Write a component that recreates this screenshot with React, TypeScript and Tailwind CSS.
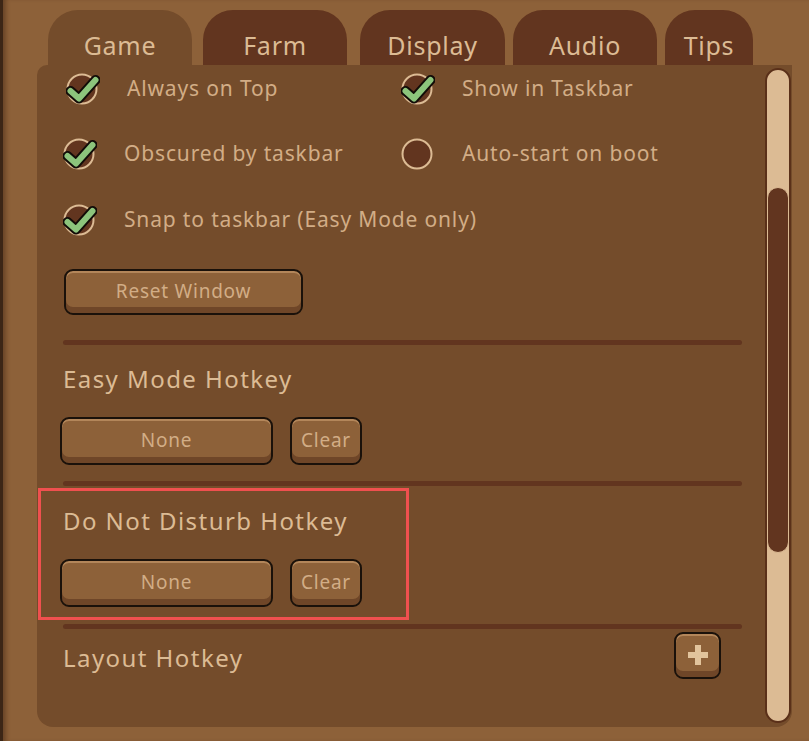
import type { ReactNode } from "react";

const FONT = { fontFamily: '"Noto Sans", "Open Sans", sans-serif' };

const tabs = [
  { label: "Game", box: "w-[144px]", active: true },
  { label: "Farm", box: "ml-[11px] w-[144px]" },
  { label: "Display", box: "ml-[13px] w-[145px]" },
  { label: "Audio", box: "ml-[8px] w-[144px]" },
  { label: "Tips", box: "ml-[8px] w-[88px]" },
];

function CheckIcon({ checked }: { checked: boolean }) {
  return (
    <svg width="34" height="34" viewBox="0 0 34 34" aria-hidden="true">
      <circle cx="16" cy="18" r="14.5" fill="#62351f" stroke="#dcbb94" strokeWidth="2" />
      {checked && (
        <>
          <path
            d="M4.5 20 L13 27.5 L29.5 9"
            fill="none"
            stroke="#120c08"
            strokeWidth="10"
            strokeLinejoin="round"
            strokeLinecap="round"
          />
          <path
            d="M4.5 20 L13 27.5 L29.5 9"
            fill="none"
            stroke="#8cc47c"
            strokeWidth="6"
            strokeLinejoin="round"
            strokeLinecap="round"
          />
        </>
      )}
    </svg>
  );
}

function Option({ label, checked, className = "" }: { label: string; checked: boolean; className?: string }) {
  return (
    <div className={`flex items-center ${className}`}>
      <div className="-mt-[2px] w-[34px]">
        <CheckIcon checked={checked} />
      </div>
      <span className="ml-[27px] text-[21px] tracking-[0.04em] text-[#d2ad86]">{label}</span>
    </div>
  );
}

function WoodButton({ children, className }: { children: ReactNode; className: string }) {
  return (
    <button
      className={`flex items-center justify-center rounded-[9px] border-2 border-[#1a110a] bg-[#8d6139] pb-[2px] text-[19px] tracking-[0.04em] text-[#d2ad86] shadow-[inset_0_-6px_0_#6f4628,inset_0_2px_0_#b3865a] ${className}`}
    >
      {children}
    </button>
  );
}

function Separator() {
  return <div className="h-[5px] w-[679px] rounded-full bg-[#62351f]" />;
}

function SectionTitle({ children, className = "" }: { children: ReactNode; className?: string }) {
  return (
    <h2 className={`text-[24px] leading-[30px] tracking-[0.06em] text-[#dcbb94] ${className}`}>{children}</h2>
  );
}

function HotkeyRow() {
  return (
    <div className="-ml-[3px] flex gap-[17px]">
      <WoodButton className="h-[48px] w-[213px]">None</WoodButton>
      <WoodButton className="h-[48px] w-[72px]">Clear</WoodButton>
    </div>
  );
}

export default function App() {
  return (
    <div
      className="relative h-[741px] w-[809px] overflow-hidden border-l-[3px] border-[#3c2616] bg-[#8d6139] shadow-[inset_5px_0_4px_-2px_#6a4527]"
      style={FONT}
    >
      {/* tab strip */}
      <div className="flex pl-[45px] pt-[10px]">
        {tabs.map((t) => (
          <div
            key={t.label}
            className={`flex h-[55px] items-start justify-center rounded-t-[30px] pt-[19px] text-[25px] leading-[32px] tracking-[0.03em] text-[#dcbb94] ${t.box} ${
              t.active ? "bg-[#744c2b]" : "bg-[#62351f]"
            }`}
          >
            {t.label}
          </div>
        ))}
      </div>

      {/* settings panel */}
      <div className="ml-[34px] flex h-[662px] w-[755px] rounded-b-[16px] rounded-tl-[10px] bg-[#744c2b]">
        <div className="relative flex-1 pl-[26px]">
          <div className="grid grid-cols-[338px_1fr] grid-rows-[48px_48px_48px] gap-y-[17px]">
            <Option label="Always on Top" checked className="ml-[3px]" />
            <Option label="Show in Taskbar" checked />
            <Option label="Obscured by taskbar" checked />
            <Option label="Auto-start on boot" checked={false} />
            <Option label="Snap to taskbar (Easy Mode only)" checked className="col-span-2 pt-[2px]" />
          </div>

          <WoodButton className="ml-[1px] mt-[26px] h-[46px] w-[239px]">Reset Window</WoodButton>

          <div className="mt-[25px]">
            <Separator />
          </div>

          <SectionTitle className="mt-[19px]">Easy Mode Hotkey</SectionTitle>
          <div className="mt-[23px]">
            <HotkeyRow />
          </div>
          <div className="mt-[16px]">
            <Separator />
          </div>

          <SectionTitle className="mt-[20px]">Do Not Disturb Hotkey</SectionTitle>
          <div className="mt-[23px]">
            <HotkeyRow />
          </div>
          <div className="mt-[17px]">
            <Separator />
          </div>

          <div className="mt-[3px] flex h-[47px] w-[679px] items-center justify-between">
            <SectionTitle className="mt-[4px]">Layout Hotkey</SectionTitle>
            <WoodButton className="mr-[21px] h-[47px] w-[47px]">
              <svg width="22" height="22" viewBox="0 0 22 22" aria-hidden="true">
                <rect x="8" y="1" width="6" height="20" fill="#e2c49c" />
                <rect x="1" y="8" width="20" height="6" fill="#e2c49c" />
              </svg>
            </WoodButton>
          </div>

          {/* highlighted group outline */}
          <div className="pointer-events-none absolute left-[1px] top-[423px] h-[132px] w-[371px] border-[3px] border-[#f0504f]" />
        </div>

        {/* scrollbar */}
        <div className="mr-[1px] flex w-[26px] flex-col pb-[4px] pt-[3px]">
          <div className="flex flex-1 flex-col rounded-full border-2 border-[#5a3019] bg-[#dcbb94]">
            <div className="h-[117px]" />
            <div className="h-[366px] rounded-[11px] border border-[#dcbb94] bg-[#62351f]" />
          </div>
        </div>
      </div>
    </div>
  );
}
